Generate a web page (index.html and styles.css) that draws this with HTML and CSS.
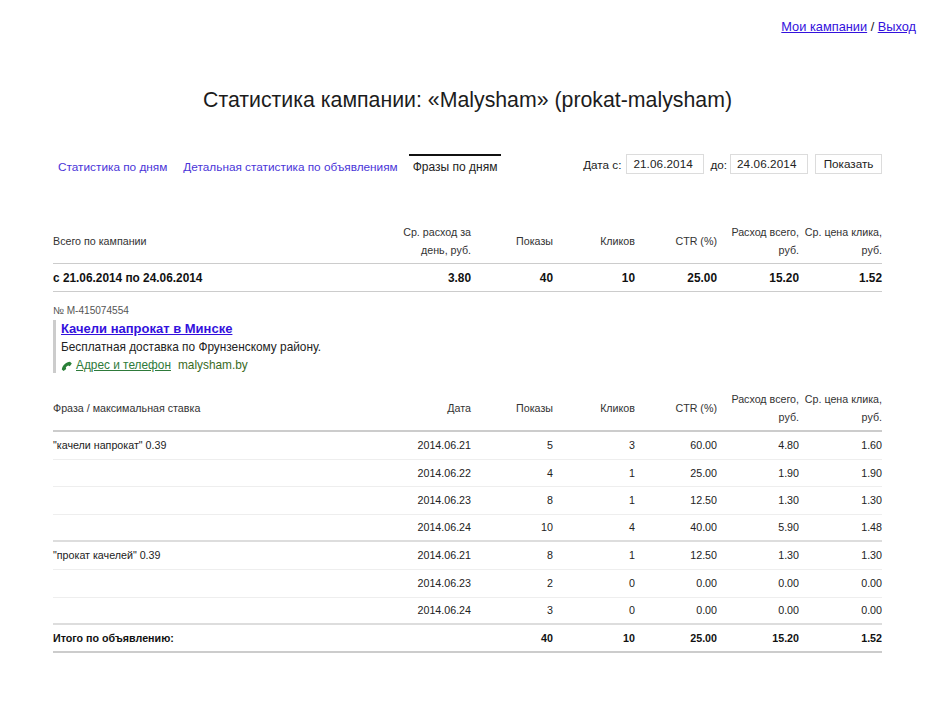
FILE: index.html
```html
<!DOCTYPE html>
<html lang="ru">
<head>
<meta charset="utf-8">
<title>Статистика кампании</title>
<link rel="stylesheet" href="styles.css">
</head>
<body>
<div class="top"><a href="#">Мои кампании</a> / <a href="#">Выход</a></div>
<h1>Статистика кампании: «Malysham» (prokat-malysham)</h1>
<div class="toolbar">
  <nav class="tabs">
    <a href="#" class="tab">Статистика по дням</a>
    <a href="#" class="tab">Детальная статистика по объявлениям</a>
    <span class="tab active">Фразы по дням</span>
  </nav>
  <form class="dates">
    <label>Дата с:</label><span class="field f1">21.06.2014</span>
    <label class="l2">до:</label><span class="field f2">24.06.2014</span>
    <span class="btn">Показать</span>
  </form>
</div>
<table class="stat summary">
  <thead>
    <tr><th class="c1">Всего по кампании</th><th>Ср. расход за<br>день, руб.</th><th>Показы</th><th>Кликов</th><th>CTR (%)</th><th>Расход всего,<br>руб.</th><th>Ср. цена клика,<br>руб.</th></tr>
  </thead>
  <tbody>
    <tr class="total tall"><td class="c1">с 21.06.2014 по 24.06.2014</td><td>3.80</td><td>40</td><td>10</td><td>25.00</td><td>15.20</td><td>1.52</td></tr>
  </tbody>
</table>
<div class="ad">
  <div class="num">№ M-415074554</div>
  <div class="ad-body">
    <a href="#" class="ad-title">Качели напрокат в Минске</a>
    <div class="ad-text">Бесплатная доставка по Фрунзенскому району.</div>
    <div class="ad-links">
      <svg class="phone" viewBox="0 0 11 11" width="11" height="11"><path d="M.8 9.6L2.6 11 5.2 9 4.8 7.6C5.4 6.8 6.2 6 7.2 5.6L8.8 6.2 10.8 3.6 9 1.8C5 2 1.4 5.4.8 9.6Z" fill="#2a8038"/></svg>
      <a href="#">Адрес и телефон</a><span class="domain">malysham.by</span>
    </div>
  </div>
</div>
<table class="stat phrases">
  <thead>
    <tr><th class="c1">Фраза / максимальная ставка</th><th>Дата</th><th>Показы</th><th>Кликов</th><th>CTR (%)</th><th>Расход всего,<br>руб.</th><th>Ср. цена клика,<br>руб.</th></tr>
  </thead>
  <tbody>
    <tr class="tall"><td class="c1">"качели напрокат" 0.39</td><td>2014.06.21</td><td>5</td><td>3</td><td>60.00</td><td>4.80</td><td>1.60</td></tr>
    <tr><td class="c1"></td><td>2014.06.22</td><td>4</td><td>1</td><td>25.00</td><td>1.90</td><td>1.90</td></tr>
    <tr class="tall"><td class="c1"></td><td>2014.06.23</td><td>8</td><td>1</td><td>12.50</td><td>1.30</td><td>1.30</td></tr>
    <tr class="end"><td class="c1"></td><td>2014.06.24</td><td>10</td><td>4</td><td>40.00</td><td>5.90</td><td>1.48</td></tr>
    <tr class="tall"><td class="c1">"прокат качелей" 0.39</td><td>2014.06.21</td><td>8</td><td>1</td><td>12.50</td><td>1.30</td><td>1.30</td></tr>
    <tr class="tall"><td class="c1"></td><td>2014.06.23</td><td>2</td><td>0</td><td>0.00</td><td>0.00</td><td>0.00</td></tr>
    <tr class="end"><td class="c1"></td><td>2014.06.24</td><td>3</td><td>0</td><td>0.00</td><td>0.00</td><td>0.00</td></tr>
    <tr class="total last tall"><td class="c1">Итого по объявлению:</td><td></td><td>40</td><td>10</td><td>25.00</td><td>15.20</td><td>1.52</td></tr>
  </tbody>
</table>
</body>
</html>
```
FILE: styles.css
```css
html, body { margin: 0; padding: 0; }
body {
  background: #fff;
  color: #1a1a1a;
  font-family: "Liberation Sans", Arial, sans-serif;
  font-size: 10.7px;
  padding: 0 53px;
  height: 701px;
  box-sizing: border-box;
  overflow: hidden;
}
a { color: #3311dd; }
.top {
  display: flex;
  justify-content: flex-end;
  gap: 3.5px;
  margin-right: -34px;
  padding-top: 19px;
  height: 45px;
  line-height: 15px;
  font-size: 12.8px;
  box-sizing: border-box;
}
h1 {
  margin: 42px 0 0;
  font-size: 21.3px;
  font-weight: normal;
  line-height: 26px;
  text-align: center;
  color: #1c1c1c;
}
.toolbar {
  display: flex;
  justify-content: space-between;
  margin-top: 41px;
  height: 30px;
}
.tabs { display: flex; }
.tab {
  display: block;
  box-sizing: border-box;
  height: 26px;
  padding: 4px 4px 0;
  line-height: 15px;
  font-size: 11.8px;
  color: #4a35d8;
  text-decoration: none;
  border-top: 2px solid transparent;
  margin-right: 7px;
}
.tab:first-child { margin-left: 1px; margin-right: 8px; }
.active { color: #222; border-top-color: #111; margin-right: 0; font-size: 12px; }
.dates { display: flex; align-items: center; height: 20px; font-size: 11.7px; color: #222; }
.l2 { margin-left: 6px; }
.field, .btn {
  box-sizing: border-box;
  height: 20px;
  line-height: 17px;
  border: 1px solid #dcdcdc;
  font-size: 11.7px;
}
.field { width: 78px; margin-left: 5px; padding-left: 6px; letter-spacing: 0.1px; }
.f2 { margin-left: 3px; }
.btn { width: 67px; margin-left: 7px; text-align: center; }
.stat { width: 829px; border-collapse: collapse; table-layout: fixed; }
.stat th, .stat td {
  padding: 0;
  text-align: right;
  font-weight: normal;
  width: 82px;
}
.stat th:last-child { width: 83px; }
.stat th {
  box-sizing: border-box;
  height: 40px;
  padding-bottom: 4px;
  line-height: 18px;
  color: #333;
  white-space: nowrap;
}
.stat td { height: 27px; box-sizing: border-box; border-bottom: 1px solid #eee; color: #222; }
.stat .tall td { height: 28px; }
.stat th.c1, .stat td.c1 { width: auto; text-align: left; }
.stat thead tr { border-bottom: 2px solid #ccc; }
.stat .end td { border-bottom: 2px solid #ddd; }
.total td { font-weight: bold; color: #111; }
.summary { margin-top: 39px; }
.summary thead tr { border-bottom: 1px solid #ccc; }
.summary .total td { font-size: 11.85px; border-bottom: 1px solid #ccc; }
.phrases { margin-top: 17px; }
.phrases .last td { border-bottom: 2px solid #ccc; }
.ad { margin-top: 12px; }
.num { font-size: 10.1px; color: #555; line-height: 13px; }
.ad-body {
  margin-top: 3px;
  border-left: 3px solid #ccc;
  padding-left: 5px;
  height: 53px;
  line-height: 18px;
  font-size: 11.85px;
}
.ad-title { display: block; font-weight: bold; font-size: 13px; }
.ad-text { color: #222; }
.ad-links { display: flex; align-items: center; color: #2e6b2e; }
.ad-links a { color: #2e7a3a; }
.phone { margin: 1px 4px 0 0; }
.domain { margin-left: 7px; color: #3a6b1e; }
```
